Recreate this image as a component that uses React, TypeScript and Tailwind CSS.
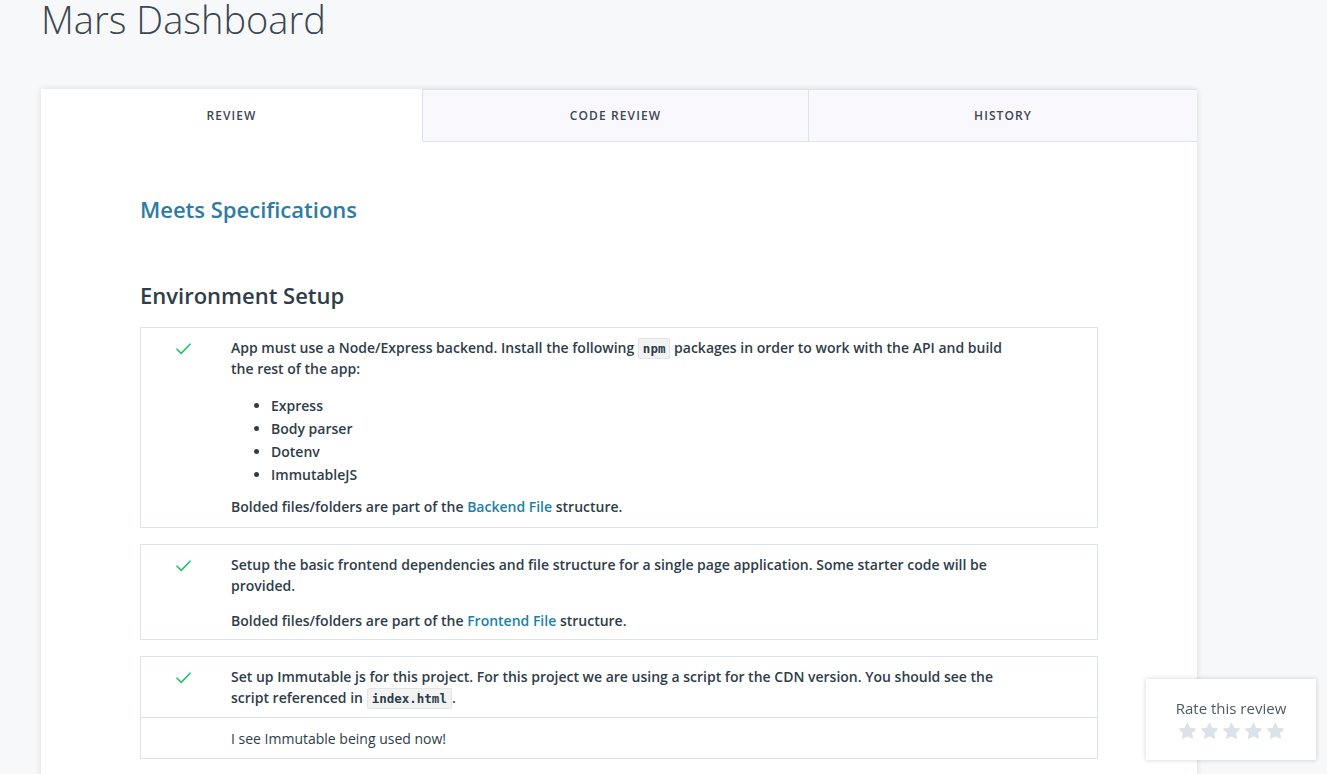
import React from "react";

const font = { fontFamily: '"Open Sans", "Noto Sans", sans-serif' };

function Check() {
  return (
    <svg width="15" height="12" viewBox="0 0 15 12" fill="none">
      <path d="M1 6.2 L5.2 10.4 L14 1.2" stroke="#22c36b" strokeWidth="1.6" strokeLinecap="round" strokeLinejoin="round" />
    </svg>
  );
}

function Code({ children }: { children: React.ReactNode }) {
  return (
    <code
      className="inline bg-[#f3f3f3] border border-[#e2e4e6] rounded-[2px] px-[4px] py-[2px] text-[12.5px] leading-none font-bold text-[#2e3d49]"
      style={{ fontFamily: '"DejaVu Sans Mono", "Liberation Mono", monospace' }}
    >
      {children}
    </code>
  );
}

function Star() {
  return (
    <svg width="19" height="18" viewBox="0 0 24 23">
      <path
        d="M12 1.5 L15.1 8 L22.2 8.9 L17 13.8 L18.3 20.9 L12 17.5 L5.7 20.9 L7 13.8 L1.8 8.9 L8.9 8 Z"
        fill="#dbe2e8"
        stroke="#dbe2e8"
        strokeWidth="1.5"
        strokeLinejoin="round"
      />
    </svg>
  );
}

function Link({ children }: { children: React.ReactNode }) {
  return <span className="text-[#1c81a6]">{children}</span>;
}

export default function App() {
  return (
    <div className="min-h-screen bg-[#f7f8fa] text-[#2e3d49]" style={font}>
      <div className="pl-[41px]">
        <h1 className="text-[38px] leading-[38px] font-light text-[#3c4650]">Mars Dashboard</h1>
      </div>
      <div className="ml-[41px] mt-[51px] w-[1156px] bg-white shadow-[0_0_6px_rgba(0,0,0,0.12)] pb-[200px]">
        <div className="flex h-[53px]">
          <div className="w-[381px] flex items-center justify-center text-[12px] font-semibold tracking-[1.1px] text-[#3d4752]">
            REVIEW
          </div>
          <div className="w-[386px] flex items-center justify-center bg-[#f9f8fc] border-l border-b border-t border-[#dde3ea] text-[12px] font-semibold tracking-[1.1px] text-[#3d4752]">
            CODE REVIEW
          </div>
          <div className="flex-1 flex items-center justify-center bg-[#f9f8fc] border-l border-b border-t border-[#dde3ea] text-[12px] font-semibold tracking-[1.1px] text-[#3d4752]">
            HISTORY
          </div>
        </div>
        <div className="px-[99px] pt-[54px]">
          <h2 className="text-[22px] leading-[27px] font-semibold text-[#2f7ba1]">Meets Specifications</h2>
          <h3 className="mt-[59px] text-[22px] leading-[26px] font-semibold text-[#2e3d49]">Environment Setup</h3>

          <div className="mt-[19px] border border-[#dde3ea] flex">
            <div className="w-[90px] shrink-0 pl-[35px] pt-[15px]">
              <Check />
            </div>
            <div className="w-[785px] pt-[9px] pb-[10px] text-[14px] font-semibold leading-[21px]">
              <p>
                App must use a Node/Express backend. Install the following <Code>npm</Code> packages in order to work with the API and build the rest of the app:
              </p>
              <ul className="mt-[15px] mb-[10px] pl-[40px] list-disc leading-[23px] marker:text-[#2e3d49]">
                <li>Express</li>
                <li>Body parser</li>
                <li>Dotenv</li>
                <li>ImmutableJS</li>
              </ul>
              <p>
                Bolded files/folders are part of the <Link>Backend File</Link> structure.
              </p>
            </div>
          </div>

          <div className="mt-[16px] border border-[#dde3ea] flex">
            <div className="w-[90px] shrink-0 pl-[35px] pt-[15px]">
              <Check />
            </div>
            <div className="w-[785px] pt-[9px] pb-[8px] text-[14px] font-semibold leading-[21px]">
              <p>
                Setup the basic frontend dependencies and file structure for a single page application. Some starter code will be provided.
              </p>
              <p className="mt-[14px]">
                Bolded files/folders are part of the <Link>Frontend File</Link> structure.
              </p>
            </div>
          </div>

          <div className="mt-[16px] border border-[#dde3ea]">
            <div className="flex">
              <div className="w-[90px] shrink-0 pl-[35px] pt-[15px]">
                <Check />
              </div>
              <div className="w-[785px] pt-[9px] pb-[9px] text-[14px] font-semibold leading-[21px]">
                <p>
                  Set up Immutable js for this project. For this project we are using a script for the CDN version. You should see the script referenced in <Code>index.html</Code>.
                </p>
              </div>
            </div>
            <div className="border-t border-[#dde3ea] flex">
              <div className="w-[90px] shrink-0" />
              <div className="pt-[10px] pb-[9px] text-[14px] leading-[21px]">I see Immutable being used now!</div>
            </div>
          </div>

          <h3 className="mt-[50px] text-[22px] leading-[26px] font-semibold text-[#2e3d49]">API Calls</h3>
        </div>
      </div>

      <div className="fixed right-[11px] bottom-[14px] w-[170px] h-[81px] bg-white shadow-[0_0_5px_rgba(0,0,0,0.18)] flex flex-col items-center pt-[19px]">
        <div className="text-[15px] leading-[20px] text-[#4f5a64]">Rate this review</div>
        <div className="flex gap-[3px] mt-[4px]">
          <Star />
          <Star />
          <Star />
          <Star />
          <Star />
        </div>
      </div>
    </div>
  );
}
